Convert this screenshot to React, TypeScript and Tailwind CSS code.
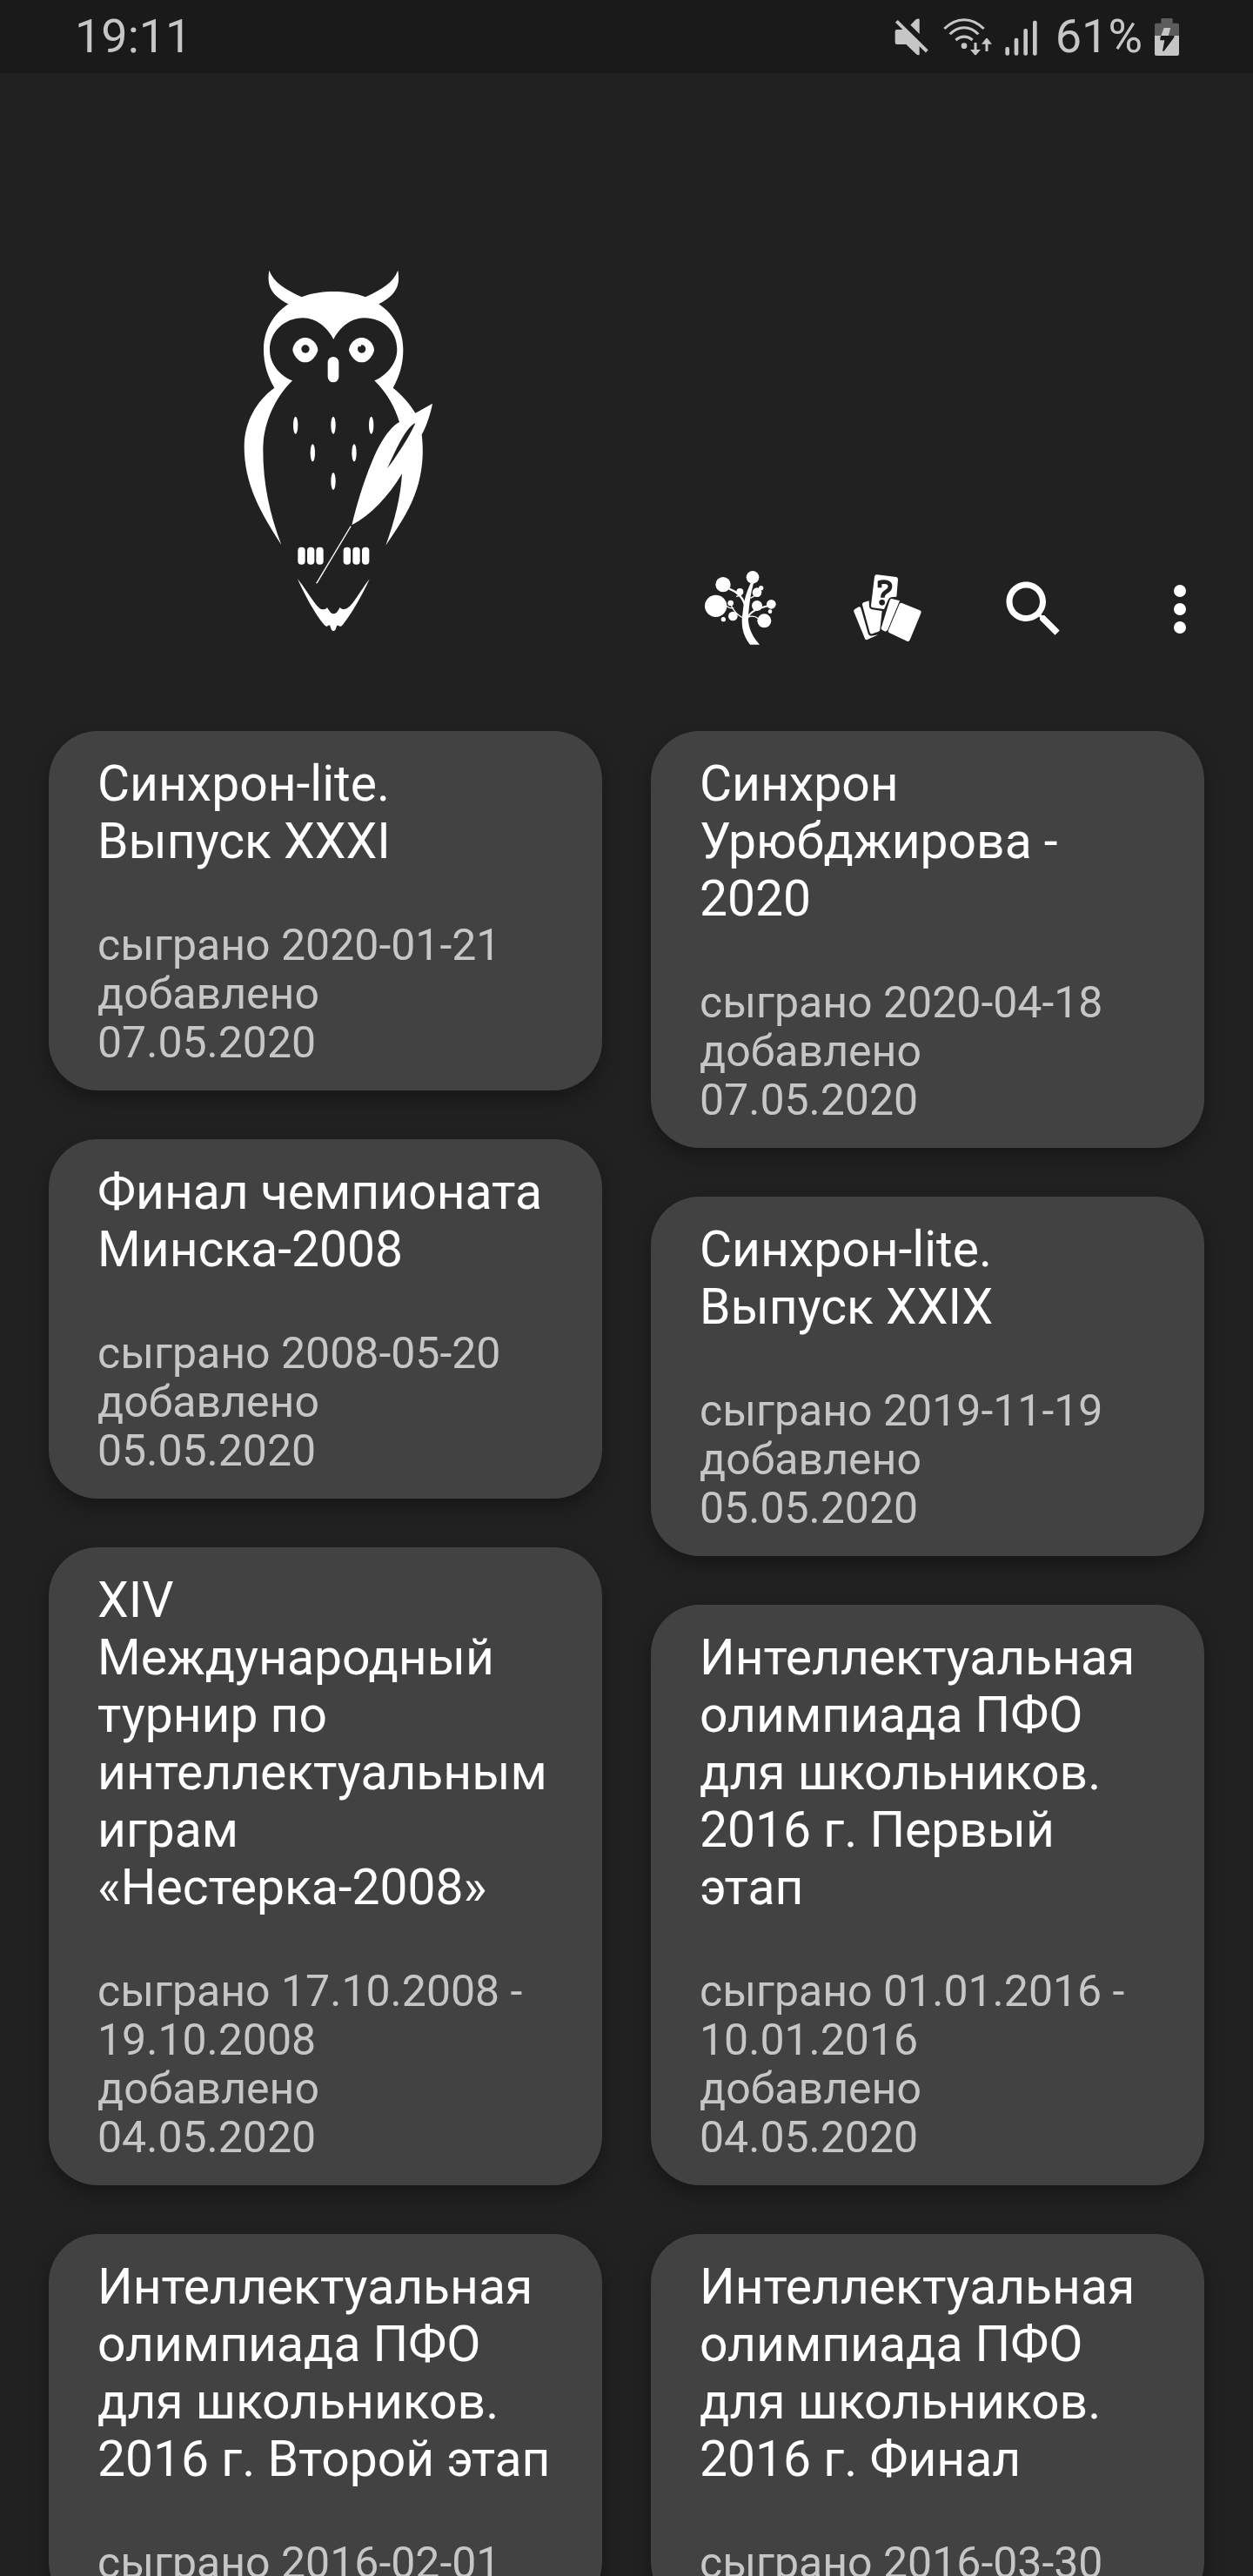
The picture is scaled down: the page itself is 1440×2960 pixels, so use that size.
import React from "react";

type Pack = { title: string; played: string; added?: string };

const leftPacks: Pack[] = [
  { title: "Синхрон-lite.\nВыпуск XXXI", played: "2020-01-21", added: "07.05.2020" },
  { title: "Финал чемпионата\nМинска-2008", played: "2008-05-20", added: "05.05.2020" },
  {
    title: "XIV\nМеждународный\nтурнир по\nинтеллектуальным\nиграм\n«Нестерка-2008»",
    played: "17.10.2008 -\n19.10.2008",
    added: "04.05.2020",
  },
  { title: "Интеллектуальная\nолимпиада ПФО\nдля школьников.\n2016 г. Второй этап", played: "2016-02-01" },
];

const rightPacks: Pack[] = [
  { title: "Синхрон\nУрюбджирова -\n2020", played: "2020-04-18", added: "07.05.2020" },
  { title: "Синхрон-lite.\nВыпуск XXIX", played: "2019-11-19", added: "05.05.2020" },
  {
    title: "Интеллектуальная\nолимпиада ПФО\nдля школьников.\n2016 г. Первый\nэтап",
    played: "01.01.2016 -\n10.01.2016",
    added: "04.05.2020",
  },
  { title: "Интеллектуальная\nолимпиада ПФО\nдля школьников.\n2016 г. Финал", played: "2016-03-30" },
];

function MuteIcon() {
  return (
    <svg viewBox="88 60 120 129" className="h-[43px] w-10" fill="#c6c6c6" aria-hidden="true">
      <path d="M174 62V114L143 83L162 64Q168 60 174 62Z" />
      <path d="M95 70L200 174" stroke="#c6c6c6" strokeWidth="12" />
      <path d="M96 99H124L174 149V186Q168 188 163 184L128 150H96Q90 150 90 144V105Q90 99 96 99Z" />
    </svg>
  );
}

function WifiIcon() {
  return (
    <svg viewBox="253 60 171 129" className="h-[43px] w-[57px]" fill="none" stroke="#c6c6c6" strokeWidth="9" aria-hidden="true">
      <path d="M257 96Q288 65 325 65Q362 65 393 96" />
      <path d="M276 115Q298 92 325 92Q352 92 374 115" />
      <path d="M296 135Q325 112 354 135" />
      <circle cx="325" cy="155" r="10" fill="#c6c6c6" stroke="none" />
      <path d="M364 144V176M403 174V138" strokeWidth="9" />
      <path d="M346 168H382L366 187H362ZM385 149H421L405 129H401Z" fill="#c6c6c6" stroke="none" />
    </svg>
  );
}

function SignalIcon() {
  return (
    <svg viewBox="467 60 111 129" className="h-[43px] w-[37px]" fill="#c6c6c6" aria-hidden="true">
      <rect x="468" y="159" width="14" height="29" rx="6" />
      <rect x="499" y="128" width="14" height="60" rx="6" />
      <rect x="531" y="96" width="14" height="92" rx="6" />
      <rect x="563" y="68" width="14" height="120" rx="6" />
    </svg>
  );
}

function BatteryIcon() {
  return (
    <svg viewBox="981 60 84 129" className="h-[43px] w-7" aria-hidden="true">
      <path d="M1006 60H1040Q1043 60 1043 63V77H1060Q1065 77 1065 82V122H981V82Q981 77 986 77H1003V63Q1003 60 1006 60Z" fill="#5c5c5c" />
      <path d="M981 120H1065V183Q1065 189 1059 189H987Q981 189 981 183Z" fill="#c6c6c6" />
      <path d="M1013 93H1036L1028 120H1003Z" fill="#c6c6c6" />
      <path d="M1003 120H1048L1048 126L1013 173H1008L1015 136H1000V128Z" fill="#1a1a1a" />
    </svg>
  );
}

function OwlLogo() {
  return (
    <svg viewBox="60 60 660 1251" className="h-[417px] w-[220px] shrink-0" fill="#fff" role="img" aria-label="Сова">
      <path d="M148 62C165 105 200 125 260 154C295 140 335 135 370 135C405 135 445 140 480 154C540 125 575 105 592 62C600 110 590 145 526 178C580 215 610 270 610 335C610 385 598 425 575 467C605 490 635 525 652 554L711 521C705 555 690 600 674 628C684 710 672 790 640 860C615 915 580 965 550 1010C580 930 602 840 606 763C560 840 500 905 433 940C450 870 470 800 503 720C525 665 560 605 597 585C582 535 555 485 511 442C550 425 589 385 589 335C589 270 540 226 475 226C430 226 390 260 370 300C350 260 310 226 265 226C200 226 150 275 150 335C150 385 185 425 228 442C160 510 127 600 127 680C127 800 150 900 190 1008C120 900 62 800 62 670C62 590 100 515 166 467C142 425 129 385 129 335C129 270 160 215 214 178C150 145 140 110 148 62Z" />
      <path d="M652 588C625 600 595 655 555 745C590 700 640 620 652 588Z" fill="#212121" />
      <path d="M272 294C294 294 316 316 316 338C308 362 292 379 272 379C252 379 236 362 229 338C229 316 250 294 272 294Z" />
      <path d="M467 294C489 294 510 316 510 338C503 362 487 379 467 379C447 379 431 362 423 338C423 316 445 294 467 294Z" />
      <circle cx="273" cy="333" r="14" fill="#212121" />
      <circle cx="467" cy="333" r="14" fill="#212121" />
      <circle cx="461" cy="321" r="4" />
      <rect x="350" y="360" width="38" height="88" rx="19" />
      <ellipse cx="239" cy="596" rx="8" ry="30" />
      <ellipse cx="369" cy="596" rx="8" ry="30" />
      <ellipse cx="500" cy="596" rx="8" ry="30" />
      <ellipse cx="298" cy="691" rx="8" ry="30" />
      <ellipse cx="441" cy="691" rx="8" ry="30" />
      <ellipse cx="369" cy="789" rx="8" ry="30" />
      <path d="M428 943L431 945L314 1141L309 1141Z" />
      <rect x="247" y="1016" width="25" height="60" rx="12" />
      <rect x="279" y="1016" width="25" height="60" rx="12" />
      <rect x="310" y="1016" width="25" height="60" rx="12" />
      <rect x="404" y="1016" width="25" height="60" rx="12" />
      <rect x="436" y="1016" width="25" height="60" rx="12" />
      <rect x="468" y="1016" width="25" height="60" rx="12" />
      <path d="M246 1126C275 1160 310 1225 328 1230C338 1232 344 1230 348 1224C356 1238 362 1246 370 1246C378 1246 386 1238 391 1224C397 1230 406 1232 415 1228C435 1220 460 1170 494 1126C470 1180 430 1250 402 1283C396 1290 392 1291 390 1288C386 1286 383 1286 381 1287C379 1297 376 1305 370 1305C364 1305 360 1297 358 1286C354 1285 350 1286 348 1289C345 1291 341 1288 336 1282C305 1245 270 1180 246 1126Z" />
    </svg>
  );
}

function TreeIcon() {
  return (
    <svg viewBox="60 54 252 252" className="size-[84px] overflow-visible" fill="#fff" aria-hidden="true">
      <circle cx="225" cy="70" r="22" />
      <circle cx="123" cy="95" r="26" />
      <circle cx="98" cy="169" r="38" />
      <circle cx="181" cy="120" r="12" />
      <circle cx="240" cy="122" r="16" />
      <circle cx="254" cy="107" r="8" />
      <circle cx="149" cy="159" r="10" />
      <circle cx="157" cy="204" r="16" />
      <circle cx="124" cy="215" r="8" />
      <circle cx="240" cy="168" r="18" />
      <circle cx="289" cy="163" r="16" />
      <circle cx="285" cy="188" r="7" />
      <circle cx="265" cy="220" r="24" />
      <path d="M219 88L228 90C218 125 214 160 211 190C206 230 215 265 249 302H216C186 265 185 225 191 190C194 150 204 120 219 88Z" />
      <g fill="none" stroke="#fff">
        <path d="M144 110C176 122 194 145 200 172" strokeWidth="7" />
        <path d="M132 168Q148 179 160 176M150 166Q166 200 194 211" strokeWidth="4" />
        <path d="M168 136L186 132M217 142L232 134" strokeWidth="4" />
        <path d="M208 208C220 185 245 177 280 168" strokeWidth="6" />
        <path d="M208 208Q228 199 244 212" strokeWidth="4" />
      </g>
    </svg>
  );
}

function CardsIcon() {
  return (
    <svg viewBox="564 54 252 252" className="size-[84px] overflow-visible" fill="#fff" aria-hidden="true">
      <path d="M577 180L591 172Q596 170 598 176L623 263Q626 272 634 272L658 268L620 285Q615 287 612 281L574 189Q572 183 577 180Z" />
      <path d="M607 157L626 151L627 172Q628 180 636 181L671 186L664 250Q664 255 659 257L637 265Q631 266 629 261L603 165Q602 159 607 157Z" />
      <path d="M654 61L719 69Q726 70 726 77L721 137L706 138Q697 138 693 146L678 180L640 175Q632 174 633 167L645 68Q647 60 654 61Z" />
      <path d="M704 144L732 151L690 252L683 257L672 252Q666 249 669 242L697 151Q699 144 704 144Z" />
      <path d="M740 159L801 184Q808 187 805 194L767 286Q764 293 757 290L697 262Q690 259 693 252L730 164Q733 156 740 159Z" />
      <path d="M663 106V88Q672 85 680 86Q699 87 699 102Q698 113 685 120Q673 127 673 140" fill="none" stroke="#212121" strokeWidth="14" />
      <circle cx="671" cy="157" r="10" fill="#212121" />
    </svg>
  );
}

function SearchIcon() {
  return (
    <svg viewBox="0 0 24 24" className="size-[84px]" fill="#fff" aria-hidden="true">
      <path d="M15.5 14h-.79l-.28-.27C15.41 12.59 16 11.11 16 9.5 16 5.91 13.09 3 9.5 3S3 5.91 3 9.5 5.91 16 9.5 16c1.61 0 3.09-.59 4.23-1.57l.27.28v.79l5 4.99L20.49 19l-4.99-5zm-6 0C7.01 14 5 11.99 5 9.5S7.01 5 9.5 5 14 7.01 14 9.5 11.99 14 9.5 14z" />
    </svg>
  );
}

function MoreIcon() {
  return (
    <svg viewBox="0 0 24 24" className="size-[84px]" fill="#fff" aria-hidden="true">
      <circle cx="12" cy="6" r="2" />
      <circle cx="12" cy="12" r="2" />
      <circle cx="12" cy="18" r="2" />
    </svg>
  );
}

function ToolButton({ label, children }: { label: string; children: React.ReactNode }) {
  return (
    <button type="button" aria-label={label} className="flex size-[168px] items-center justify-center">
      {children}
    </button>
  );
}

function PackCard({ pack }: { pack: Pack }) {
  const lines = ["сыграно " + pack.played];
  if (pack.added) lines.push("добавлено", pack.added);

  return (
    <a
      href="#"
      className="block rounded-[56px] bg-[#424242] px-14 pt-7 pb-[27px] whitespace-pre-line shadow-[0_10px_22px_rgba(0,0,0,0.32)]"
    >
      <h2 className="text-[57px] leading-[66px] text-white">{pack.title}</h2>
      <p className="mt-[58px] text-[50px] leading-[56px] text-[#c6c6c6]">{lines.join("\n")}</p>
    </a>
  );
}

export default function App() {
  return (
    <div className="flex h-screen flex-col overflow-hidden bg-[#212121] font-['Roboto',sans-serif]">
      <div className="flex h-21 shrink-0 items-center justify-between bg-[#1a1a1a] pr-[85px] pl-[86px] text-[54px] leading-[84px] text-[#c6c6c6]">
        <time>19:11</time>
        <div className="flex items-center">
          <MuteIcon />
          <div className="ml-4 flex items-center gap-[14px]">
            <WifiIcon />
            <SignalIcon />
          </div>
          <span className="mr-[14px] ml-[21px]">61%</span>
          <BatteryIcon />
        </div>
      </div>

      <header className="flex shrink-0 items-end justify-between pt-[226px] pb-14 pl-[280px]">
        <div className="pb-[57px]">
          <OwlLogo />
        </div>
        <nav className="flex">
          <ToolButton label="Дерево">
            <TreeIcon />
          </ToolButton>
          <ToolButton label="Случайные вопросы">
            <CardsIcon />
          </ToolButton>
          <ToolButton label="Поиск">
            <SearchIcon />
          </ToolButton>
          <ToolButton label="Ещё">
            <MoreIcon />
          </ToolButton>
        </nav>
      </header>

      <main className="grid grid-cols-2 items-start gap-14 px-14">
        <div className="flex flex-col gap-14">
          {leftPacks.map((pack) => (
            <PackCard key={pack.title} pack={pack} />
          ))}
        </div>
        <div className="flex flex-col gap-14">
          {rightPacks.map((pack) => (
            <PackCard key={pack.title} pack={pack} />
          ))}
        </div>
      </main>
    </div>
  );
}
